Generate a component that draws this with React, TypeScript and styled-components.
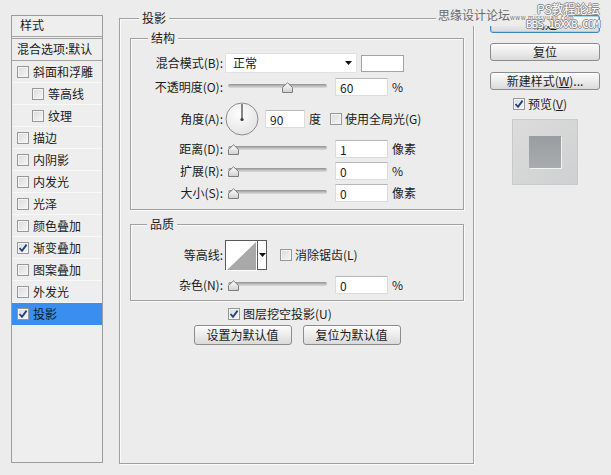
import React, { FC } from 'react'
import styled, { createGlobalStyle } from 'styled-components'

const GlobalStyle = createGlobalStyle`
  html, body {
    margin: 0;
    padding: 0;
    background: #ececec;
  }
  body {
    font: 12px/16px "Noto Sans CJK SC", "Noto Sans", sans-serif;
    color: #1b1b1b;
  }
`

type TStyleItem = { label: string, sub?: boolean, checked?: boolean, active?: boolean }

const styleItems: TStyleItem[] = [
  { label: '斜面和浮雕' },
  { label: '等高线', sub: true },
  { label: '纹理', sub: true },
  { label: '描边' },
  { label: '内阴影' },
  { label: '内发光' },
  { label: '光泽' },
  { label: '颜色叠加' },
  { label: '渐变叠加', checked: true },
  { label: '图案叠加' },
  { label: '外发光' },
  { label: '投影', checked: true, active: true },
]

const Check: FC<{ checked?: boolean }> = ({ checked }) => (
  <S.CheckBox>
    {checked && (
      <svg width="10" height="10" viewBox="0 0 10 10">
        <path d="M1.5 5 L4 7.8 L8.6 1.6" fill="none" stroke="#233f7c" strokeWidth="1.8" />
      </svg>
    )}
  </S.CheckBox>
)

const Slider: FC<{ value: number }> = ({ value }) => (
  <S.Slider>
    <S.Track />
    <S.Thumb style={{ left: Math.max(0, Math.round(value * 99 / 100 - 5)) }}>
      <svg width="11" height="11" viewBox="0 0 11 11">
        <defs>
          <linearGradient id="thumbFill" x1="0" y1="0" x2="0" y2="1">
            <stop offset="0" stopColor="#ffffff" />
            <stop offset="1" stopColor="#cfcfcf" />
          </linearGradient>
        </defs>
        <path d="M0.5 10.5 V5.5 L5.5 0.8 L10.5 5.5 V10.5 Z" fill="url(#thumbFill)" stroke="#7d7d7d" />
      </svg>
    </S.Thumb>
  </S.Slider>
)

const Dial: FC = () => (
  <svg width="34" height="34" viewBox="0 0 34 34">
    <defs>
      <radialGradient id="dialFill" cx="0.4" cy="0.35" r="0.7">
        <stop offset="0" stopColor="#fdfdfd" />
        <stop offset="1" stopColor="#e3e3e3" />
      </radialGradient>
    </defs>
    <circle cx="17" cy="17" r="16" fill="url(#dialFill)" stroke="#8c8c8c" />
    <line x1="17" y1="17.5" x2="17" y2="2" stroke="#3a3a3a" strokeWidth="1.2" />
    <circle cx="17" cy="17.5" r="1.6" fill="#3a3a3a" />
  </svg>
)

const Contour: FC = () => (
  <S.ContourBox>
    <svg width="31" height="30" viewBox="0 0 31 30">
      <rect x="0" y="0" width="31" height="30" fill="#ffffff" />
      <path d="M1 29 L30 1 V29 Z" fill="#a9a9a9" />
    </svg>
    <S.ContourArrow>
      <svg width="7" height="4" viewBox="0 0 7 4"><path d="M0 0 H7 L3.5 4 Z" fill="#111" /></svg>
    </S.ContourArrow>
  </S.ContourBox>
)

export default function App() {
  return (
    <>
      <GlobalStyle />
      <S.Window>
        <S.StylesPanel>
          <S.PanelHeader>样式</S.PanelHeader>
          <S.DefaultRow>混合选项:默认</S.DefaultRow>
          {styleItems.map(item => (
            <S.StyleRow key={item.label} $sub={item.sub} $active={item.active}>
              <Check checked={item.checked} />
              <span>{item.label}</span>
            </S.StyleRow>
          ))}
        </S.StylesPanel>

        <S.OuterGroup>
          <S.GroupTitle $indent={9}>投影</S.GroupTitle>

          <S.Group $top={12} $height={172}>
            <S.GroupTitle $indent={17}>结构</S.GroupTitle>
            <S.Row $top={7} $height={20}>
              <S.Label>混合模式(B):</S.Label>
              <S.Select>
                <span>正常</span>
                <svg width="7" height="4" viewBox="0 0 7 4"><path d="M0 0 H7 L3.5 4 Z" fill="#111" /></svg>
              </S.Select>
              <S.Swatch />
            </S.Row>
            <S.Row $top={5} $height={18}>
              <S.Label>不透明度(O):</S.Label>
              <Slider value={60} />
              <S.Field>60</S.Field>
              <S.Unit>%</S.Unit>
            </S.Row>
            <S.Row $top={6} $height={34}>
              <S.Label>角度(A):</S.Label>
              <Dial />
              <S.Field $width={40} $gap={6}>90</S.Field>
              <S.Unit>度</S.Unit>
              <S.CheckLabel $gap={9}>
                <Check />
                <span>使用全局光(G)</span>
              </S.CheckLabel>
            </S.Row>
            <S.Row $top={4} $height={18}>
              <S.Label>距离(D):</S.Label>
              <Slider value={0} />
              <S.Field>1</S.Field>
              <S.Unit>像素</S.Unit>
            </S.Row>
            <S.Row $top={4} $height={18}>
              <S.Label>扩展(R):</S.Label>
              <Slider value={0} />
              <S.Field>0</S.Field>
              <S.Unit>%</S.Unit>
            </S.Row>
            <S.Row $top={4} $height={18}>
              <S.Label>大小(S):</S.Label>
              <Slider value={0} />
              <S.Field>0</S.Field>
              <S.Unit>像素</S.Unit>
            </S.Row>
          </S.Group>

          <S.Group $top={14} $height={77}>
            <S.GroupTitle $indent={16}>品质</S.GroupTitle>
            <S.Row $top={8} $height={30}>
              <S.Label>等高线:</S.Label>
              <Contour />
              <S.CheckLabel $gap={13}>
                <Check />
                <span>消除锯齿(L)</span>
              </S.CheckLabel>
            </S.Row>
            <S.Row $top={6} $height={18}>
              <S.Label>杂色(N):</S.Label>
              <Slider value={0} />
              <S.Field>0</S.Field>
              <S.Unit>%</S.Unit>
            </S.Row>
          </S.Group>

          <S.KnockoutRow>
            <Check checked />
            <span>图层挖空投影(U)</span>
          </S.KnockoutRow>
          <S.ButtonRow>
            <S.Button $width={98}>设置为默认值</S.Button>
            <S.Button $width={98}>复位为默认值</S.Button>
          </S.ButtonRow>
        </S.OuterGroup>

        <S.Side>
          <S.Button $primary>确定</S.Button>
          <S.Button $top={10}>复位</S.Button>
          <S.Button $top={11}>新建样式(<u>W</u>)...</S.Button>
          <S.PreviewToggle>
            <Check checked />
            <span>预览(<u>V</u>)</span>
          </S.PreviewToggle>
          <S.PreviewBox>
            <S.PreviewSwatch />
          </S.PreviewBox>
        </S.Side>

        <S.WatermarkA>思缘设计论坛<S.Dots>www.missyuan.com</S.Dots></S.WatermarkA>
        <S.WatermarkB>PS教程论坛</S.WatermarkB>
        <S.WatermarkC>BBS.16XX8.COM</S.WatermarkC>
      </S.Window>
    </>
  )
}

const outline = `
  color: #fff;
  text-shadow: 1px 0 0 #8a8a8a, -1px 0 0 #8a8a8a, 0 1px 0 #8a8a8a, 0 -1px 0 #8a8a8a;
`

const S = {
  Window: styled.div`
    position: relative;
    display: flex;
    align-items: flex-start;
    width: 611px;
    height: 475px;
    overflow: hidden;
    background: #ececec;
  `,
    StylesPanel: styled.div`
      box-sizing: border-box;
      display: flex;
      flex-direction: column;
      width: 92px;
      height: 448px;
      margin: 15px 0 0 11px;
      border: 1px solid #9c9c9c;
      background: #eeeeee;
    `,
      PanelHeader: styled.div`
        height: 21px;
        padding: 1px 0 0 8px;
        box-sizing: border-box;
        border-bottom: 1px solid #a4a4a4;
      `,
      DefaultRow: styled.div`
        height: 21px;
        margin-top: 1px;
        padding: 2px 0 0 5px;
        box-sizing: border-box;
        border-top: 1px solid #a4a4a4;
        border-bottom: 1px solid #a4a4a4;
        box-sizing: content-box;
        height: 19px;
        white-space: nowrap;
      `,
      StyleRow: styled.div<{ $sub?: boolean, $active?: boolean }>`
        display: flex;
        align-items: center;
        gap: 4px;
        height: 21px;
        padding-left: ${p => p.$sub ? 20 : 5}px;
        border-bottom: 1px solid ${p => p.$active ? '#3a8ef0' : '#f8f8f8'};
        background: ${p => p.$active ? '#3a8ef0' : 'transparent'};
        color: ${p => p.$active ? '#0d1c3a' : 'inherit'};
      `,
    OuterGroup: styled.div`
      box-sizing: border-box;
      width: 355px;
      height: 446px;
      margin: 18px 0 0 16px;
      padding: 0 9px 0 10px;
      border: 1px solid #a0a0a0;
      box-shadow: 1px 1px 0 #fafafa, inset 1px 1px 0 #fafafa;
    `,
      GroupTitle: styled.div<{ $indent: number }>`
        width: fit-content;
        margin: -9px 0 0 ${p => p.$indent}px;
        padding: 0 3px;
        line-height: 16px;
        background: #ececec;
      `,
      Group: styled.div<{ $top: number, $height: number }>`
        box-sizing: border-box;
        height: ${p => p.$height}px;
        margin-top: ${p => p.$top}px;
        border: 1px solid #a0a0a0;
        box-shadow: 1px 1px 0 #fafafa, inset 1px 1px 0 #fafafa;
      `,
        Row: styled.div<{ $top: number, $height: number }>`
          display: flex;
          align-items: center;
          height: ${p => p.$height}px;
          margin-top: ${p => p.$top}px;
          white-space: nowrap;
        `,
          Label: styled.span`
            box-sizing: border-box;
            width: 94px;
            padding-right: 2px;
            text-align: right;
          `,
          Select: styled.div`
            box-sizing: border-box;
            display: flex;
            align-items: center;
            justify-content: space-between;
            width: 132px;
            height: 20px;
            padding: 0 4px 0 7px;
            background: #fff;
            border: 1px solid #e2e2e2;
          `,
          Swatch: styled.div`
            width: 43px;
            height: 17px;
            margin-left: 4px;
            box-sizing: border-box;
            background: #fff;
            border: 1px solid #a3a3a3;
          `,
          Slider: styled.div`
            position: relative;
            width: 99px;
            height: 18px;
            margin-left: 3px;
          `,
            Track: styled.div`
              height: 4px;
              margin-top: 6px;
              border-radius: 2px;
              background: linear-gradient(#8f8f8f, #c4c4c4 60%, #dadada);
            `,
            Thumb: styled.div`
              position: absolute;
              top: 4px;
              width: 11px;
              height: 11px;
              line-height: 0;
            `,
          Field: styled.div<{ $width?: number, $gap?: number }>`
            box-sizing: border-box;
            width: ${p => p.$width ?? 53}px;
            height: 18px;
            margin-left: ${p => p.$gap ?? 8}px;
            padding-left: 4px;
            line-height: 17px;
            background: #fff;
            border: 1px solid #dcdcdc;
            border-top-color: #b8b8b8;
          `,
          Unit: styled.span`
            margin-left: 4px;
          `,
          CheckLabel: styled.div<{ $gap: number }>`
            display: flex;
            align-items: center;
            gap: 3px;
            margin-left: ${p => p.$gap}px;
          `,
          ContourBox: styled.div`
            box-sizing: border-box;
            display: flex;
            width: 42px;
            height: 30px;
            border: 1px solid #5a5a5a;
            background: #fff;
            line-height: 0;
          `,
            ContourArrow: styled.div`
              display: flex;
              align-items: center;
              justify-content: center;
              flex: 1;
              border-left: 1px solid #5a5a5a;
            `,
      KnockoutRow: styled.div`
        display: flex;
        align-items: center;
        gap: 3px;
        height: 16px;
        margin: 5px 0 0 98px;
        white-space: nowrap;
      `,
      ButtonRow: styled.div`
        display: flex;
        justify-content: center;
        gap: 11px;
        margin-top: 3px;
      `,
    Button: styled.div<{ $width?: number, $top?: number, $primary?: boolean }>`
      box-sizing: border-box;
      display: flex;
      align-items: center;
      justify-content: center;
      width: ${p => p.$width ? `${p.$width}px` : '100%'};
      height: ${p => p.$width ? 20 : 18}px;
      margin-top: ${p => p.$top ?? 0}px;
      border: 1px solid ${p => p.$primary ? '#3f86b8' : '#8c8c8c'};
      border-radius: 3px;
      background: linear-gradient(#fbfbfb, #ececec 50%, #dadada);
      box-shadow: ${p => p.$primary ? 'inset 0 0 0 1px #a7d3ef' : 'inset 0 1px 0 #fff'};
      white-space: nowrap;
      u { text-underline-offset: 1px; }
    `,
    Side: styled.div`
      display: flex;
      flex-direction: column;
      width: 110px;
      margin: 15px 0 0 16px;
    `,
      PreviewToggle: styled.div`
        display: flex;
        align-items: center;
        gap: 3px;
        height: 16px;
        margin: 6px 0 0 23px;
        white-space: nowrap;
        u { text-underline-offset: 1px; }
      `,
      PreviewBox: styled.div`
        box-sizing: border-box;
        display: flex;
        align-items: center;
        justify-content: center;
        width: 66px;
        height: 66px;
        margin: 7px 0 0 22px;
        border: 1px solid #c9c9c9;
        background: linear-gradient(135deg, #dcdcdc, #cfd0d1);
      `,
        PreviewSwatch: styled.div`
          width: 32px;
          height: 32px;
          background: linear-gradient(#999ca0, #a9acaf);
          box-shadow: 1px 1px 0 #f2f2f2;
        `,
  CheckBox: styled.span`
    box-sizing: border-box;
    display: inline-flex;
    align-items: center;
    justify-content: center;
    flex: none;
    width: 12px;
    height: 12px;
    border: 1px solid #979797;
    background: linear-gradient(135deg, #dadada, #f7f7f7);
    box-shadow: inset 0 0 0 1px #f4f4f4;
  `,
  WatermarkA: styled.div`
    position: absolute;
    left: 436px;
    top: 7px;
    padding-left: 2px;
    color: #6a6a6a;
    background: #ececec;
    white-space: nowrap;
  `,
    Dots: styled.span`
      font-size: 6px;
      letter-spacing: 0.5px;
      color: #7a7a7a;
    `,
  WatermarkB: styled.div`
    position: absolute;
    left: 537px;
    top: 1px;
    ${outline}
    white-space: nowrap;
  `,
  WatermarkC: styled.div`
    position: absolute;
    left: 526px;
    top: 18px;
    font: 11px/14px "DejaVu Sans Mono", monospace;
    letter-spacing: -1px;
    ${outline}
    white-space: nowrap;
  `,
}
